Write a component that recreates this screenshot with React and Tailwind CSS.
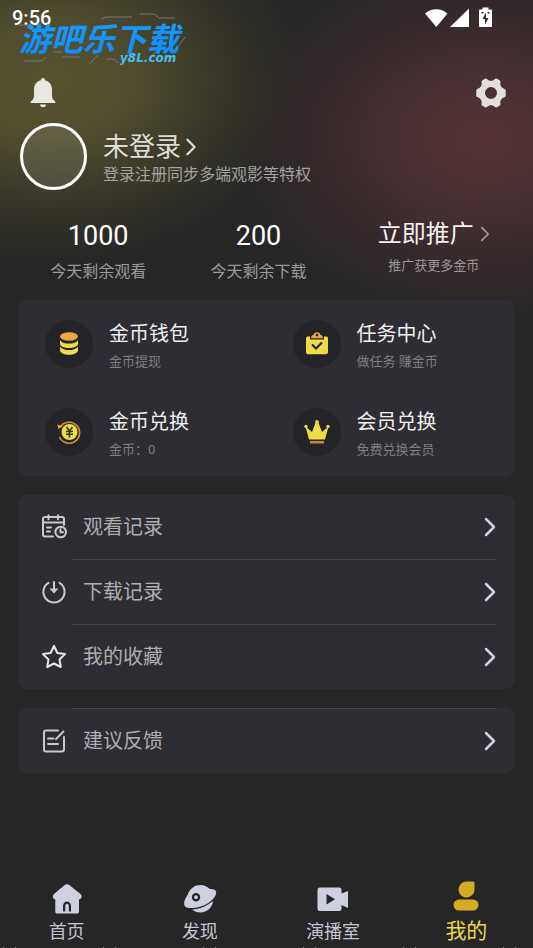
import React, { useState } from 'react';

const glow = 'bg-[radial-gradient(ellipse_250px_180px_at_50px_80px,#58532e_0%,#514e2f_30%,#3a3829_65%,transparent_100%),radial-gradient(ellipse_250px_180px_at_485px_138px,#553335_0%,#483032_35%,#35292b_70%,transparent_100%)]';

const Chevron = ({ className }) => (
  <svg viewBox="0 0 12 20" fill="none" stroke="currentColor" strokeLinecap="round" strokeLinejoin="round" className={className} aria-hidden="true">
    <path d="M2 2l8 8-8 8" />
  </svg>
);

const BellIcon = () => (
  <svg viewBox="0 0 26 30" className="w-[26px] h-[30px]" fill="#e8e7e2" aria-hidden="true">
    <path d="M13 0a2 2 0 0 1 2 2.300C19.600 3.500 22 7 22 11.500V18c0 2.300 1 3.800 3.300 5.500V25H.7v-1.500C3 21.800 4 20.300 4 18v-6.500C4 7 6.400 3.500 11 2.300A2 2 0 0 1 13 0z" />
    <path d="M10 26.500h6c0 1.500-1.300 2.700-3 2.700s-3-1.200-3-2.700z" />
  </svg>
);

const GearIcon = () => (
  <svg viewBox="0 0 30 30" className="w-[30px] h-[30px]" aria-hidden="true">
    <path
      fill="#e3dede"
      fillRule="evenodd"
      d="M6.500 2.200 9 .8c1-.4 1.700-.2 2.300.5 2.200 2 5.200 2 7.400 0 .6-.7 1.300-.9 2.300-.5l2.500 1.400c.9.500 1.100 1.200.9 2.100-.6 3 .9 5.500 3.800 6.400.9.300 1.400.8 1.500 1.800v5c-.1 1-.6 1.500-1.500 1.800-2.900.9-4.400 3.400-3.800 6.400.2.900 0 1.600-.9 2.100L21 29.200c-1 .4-1.700.2-2.300-.5-2.200-2-5.200-2-7.400 0-.6.7-1.300.9-2.300.5l-2.500-1.400c-.9-.5-1.100-1.200-.9-2.100.6-3-.9-5.500-3.800-6.400C.9 19 .4 18.500.3 17.500v-5c.1-1 .6-1.500 1.500-1.800 2.900-.9 4.400-3.400 3.800-6.400-.2-.9 0-1.600.9-2.100zM15 9a6 6 0 1 0 0 12 6 6 0 0 0 0-12z"
    />
  </svg>
);

const SignalIcons = () => (
  <svg viewBox="0 0 68 22" className="w-[68px] h-[22px]" fill="#fff" aria-hidden="true">
    <path d="M0 6.500C6.500.7 16 .7 22.500 6.500L11.300 20z" />
    <path d="M25 20 44 1.500V20z" />
    <path fillRule="evenodd" d="M57.500 .5h6v2h2.500c.5 0 1 .5 1 1v15.500c0 .6-.5 1-1 1h-11c-.6 0-1-.4-1-1V3.500c0-.5.4-1 1-1h2.500zM61 5.500 57.500 12H60v5.500L63.500 11H61zM56.500 5v1.500h2V5zM62.500 5v1.500h2V5z" />
  </svg>
);

const CoinsIcon = () => (
  <svg viewBox="0 0 24 24" className="size-6" aria-hidden="true">
    <ellipse cx="12" cy="4.500" rx="9" ry="4.200" fill="#eba640" />
    <path fill="#ecdc48" d="M3 8.200c2 2.700 5.200 3.300 9 3.300s7-.6 9-3.300v3.600c0 2.600-4 4.200-9 4.200s-9-1.600-9-4.200z" />
    <path fill="#ecdc48" d="M3 14.700C5 17.300 8.200 18 12 18s7-.7 9-3.300v3.600c0 2.700-4 4.500-9 4.500s-9-1.800-9-4.500z" />
  </svg>
);

const TaskIcon = () => (
  <svg viewBox="0 0 24 24" className="size-6" aria-hidden="true">
    <path fill="#ecdc48" d="M2.500 4.500H5V7.500h14V4.500h2.500c.8 0 1.500.8 1.500 2V20c0 1.400-.8 2.200-2 2.200H3c-1.200 0-2-.8-2-2.200V6.500c0-1.200.7-2 1.500-2z" />
    <path fill="#eba640" fillRule="evenodd" d="M8.500 3c.3-3.600 6.700-3.600 7 0 1.800.2 2.500 1.400 2.500 3.200H6C6 4.400 6.700 3.200 8.500 3zM12 1.800a1.300 1.300 0 1 0 0 2.600 1.300 1.300 0 0 0 0-2.600z" />
    <path fill="none" stroke="#242327" strokeWidth="2.200" d="m7 12.500 4 4 6-6" />
  </svg>
);

const ExchangeIcon = () => (
  <svg viewBox="0 0 24 24" className="size-6" aria-hidden="true">
    <path fill="none" stroke="#c98a35" strokeWidth="1.800" d="M3 7.500A10.500 10.500 0 1 1 2.500 17" />
    <path fill="#eba640" d="M.3 4.500 5.500 6 1.500 9z" />
    <circle cx="12.500" cy="12" r="8" fill="#ecdc48" />
    <path fill="none" stroke="#3b3620" strokeWidth="1.600" d="m9.500 7 3 4 3-4M9 11.500h7M9 14.300h7M12.500 11v6.500" />
  </svg>
);

const CrownIcon = () => (
  <svg viewBox="0 0 26 24" className="w-[26px] h-6" aria-hidden="true">
    <path fill="#ecdc48" d="m1.500 6.500 6.500 5.500L11.800 2h2.400L18 12l6.500-5.500L21 19.500H5z" />
    <circle cx="2" cy="6.500" r="1.700" fill="#ecdc48" />
    <circle cx="13" cy="1.900" r="1.800" fill="#ecdc48" />
    <circle cx="24" cy="6.500" r="1.700" fill="#ecdc48" />
    <path fill="#c98a35" d="M6 21h14v2.500H6z" />
  </svg>
);

const line = {
  viewBox: '0 0 26 26',
  fill: 'none',
  stroke: 'currentColor',
  strokeWidth: 2,
  strokeLinecap: 'round',
  strokeLinejoin: 'round',
  className: 'size-[26px] text-[#c9c8ca]',
  'aria-hidden': true,
};

const HistoryIcon = () => (
  <svg {...line}>
    <path d="M12 22.500H4c-1.400 0-2-.8-2-2V5C2 3.700 2.800 3 4 3h17c1.200 0 2 .7 2 2v6M2 8.500h21M7.500 1.300v4M17 1.300v4M6 13.500h4M6 17.500h3" />
    <circle cx="19.700" cy="18" r="5.300" />
    <path d="M19.500 15.300v3h2.500" />
  </svg>
);

const DownloadIcon = () => (
  <svg {...line}>
    <path d="M7.500 3.800a10.600 10.600 0 1 0 11 0M13 3v7" />
    <path fill="currentColor" stroke="none" d="M8.500 9.500h9L13 14.500z" />
  </svg>
);

const StarIcon = () => (
  <svg {...line} className="size-[26px] text-[#e6e5e7]">
    <path d="m13 2 3.400 7 7.600 1.100-5.500 5.400 1.300 7.500-6.800-3.500L6.200 23l1.300-7.500L2 10.100 9.600 9z" />
  </svg>
);

const FeedbackIcon = () => (
  <svg {...line}>
    <path d="M17 2.500H5C3.800 2.500 3 3.300 3 4.500v17c0 1.200.8 2 2 2h16c1.200 0 2-.8 2-2V9M22.500 3.500 15 11M7 10.500h5.500M7 16h10" />
  </svg>
);

const HomeIcon = () => (
  <svg viewBox="0 0 30 30" className="size-[30px]" fill="#ced0e2" aria-hidden="true">
    <path fillRule="evenodd" d="M12.700 1c1.400-1.100 3.200-1.100 4.600 0L28.500 10c2 1.800 1.300 5-1.500 5.500V27.500c0 1.400-.7 2-2 2H5.500c-1.500 0-2.200-.6-2.200-2v-12C.7 15 0 11.800 2 10zM11 27.500h2.300v-5.500c0-3 3.500-3 3.500 0v5.500H19v-5.500c0-6-8-6-8 0z" />
  </svg>
);

const PlanetIcon = () => (
  <svg viewBox="0 0 34 30" className="w-[34px] h-[30px]" fill="#ced0e2" aria-hidden="true">
    <path fillRule="evenodd" d="M4.500 11C7 4 12 1 17.500 1c4 0 7 1.800 9.500 4 4 0 6 .8 6.200 3.500.1 4-5 9.500-12 12.700-8 3.300-16.500 3.800-19 1.500C0 20 1.500 15.500 4.500 11zM13 9a4.200 4.200 0 1 0 0 8.400A4.200 4.200 0 0 0 13 9zm0 2.300a1.900 1.900 0 1 1 0 3.800 1.900 1.900 0 0 1 0-3.800z" />
    <path d="M9 25.500c8-.5 15-3.500 21-8.500-.5 6.500-6 11.500-12.500 11.500-3.500 0-6-1-8.500-3z" />
  </svg>
);

const StudioIcon = () => (
  <svg viewBox="0 0 32 26" className="w-8 h-[30px]" fill="#ced0e2" aria-hidden="true">
    <path fillRule="evenodd" d="M3 1.500h19c1.500 0 2.500.8 2.500 2.500v3.500L31 5v17l-6.500-3v3.500c0 1.700-1 2.500-2.500 2.500H3c-1.500 0-2.500-.8-2.500-2.500V4c0-1.700 1-2.500 2.500-2.500zM9.500 8v10.500L18 13.200z" />
  </svg>
);

const MineIcon = () => (
  <svg viewBox="0 0 26 30" className="w-[26px] h-[30px]" fill="#d5ab22" aria-hidden="true">
    <path d="M13 .5h6.500c1.200 0 2 .6 2 2V8.500a8 8 0 1 1-8.500-8z" />
    <rect x="0.500" y="18.500" width="25" height="11" rx="5.500" />
  </svg>
);

const Watermark = () => (
  <svg viewBox="0 0 170 56" className="absolute left-[17px] top-[10px] w-[170px] h-14" role="img" aria-label="游吧乐下载 y8L.com">
    <defs>
      <linearGradient id="brand" x1="0" y1="0" x2="0" y2="1">
        <stop offset="0" stopColor="#1b9dfb" />
        <stop offset="1" stopColor="#078dff" />
      </linearGradient>
    </defs>
    <g fill="none" stroke="#77757f" strokeWidth="1">
      <path d="M84 9l5-2h26M123 4h14l5 4h16M1 15h16M7 51h18l4-4M45 47h18M72 54l9-9M89 49h8l4 4M160 38l8-11M134 46l6-5M36 42h9" />
    </g>
    <text x="2" y="41" fontSize="32" fontWeight="700" fontStyle="italic" fill="url(#brand)" className="font-['Noto_Sans_CJK_SC',sans-serif]">游吧乐下载</text>
    <text x="103" y="52" fontSize="12" fontWeight="700" fontStyle="italic" fill="#45bdf2" className="font-['DejaVu_Sans',sans-serif]">y8L.com</text>
  </svg>
);

const wallet = [
  { title: '金币钱包', note: '金币提现', Icon: CoinsIcon },
  { title: '任务中心', note: '做任务 赚金币', Icon: TaskIcon },
  { title: '金币兑换', note: '金币：0', Icon: ExchangeIcon },
  { title: '会员兑换', note: '免费兑换会员', Icon: CrownIcon },
];

const records = [
  { title: '观看记录', Icon: HistoryIcon },
  { title: '下载记录', Icon: DownloadIcon },
  { title: '我的收藏', Icon: StarIcon },
];

const tabs = [
  { title: '首页', Icon: HomeIcon },
  { title: '发现', Icon: PlanetIcon },
  { title: '演播室', Icon: StudioIcon },
  { title: '我的', Icon: MineIcon },
];

const MenuRow = ({ title, Icon, divider }) => (
  <button className={`flex w-full pl-[22px] pr-[18px] text-left ${divider ? 'h-[65px]' : 'h-16'}`}>
    <span className="flex items-center w-[30px] shrink-0">
      <Icon />
    </span>
    <span className={`flex flex-1 items-center justify-between pl-3 ${divider ? 'border-t border-[#454448]' : ''}`}>
      <span className="text-xl text-[#aeadb0]">{title}</span>
      <Chevron className="w-3 h-5 stroke-[2.5] text-[#cfd0dc]" />
    </span>
  </button>
);

const Stat = ({ value, label }) => (
  <div className="flex flex-col items-center">
    <span className="text-[27px] leading-8 text-white">{value}</span>
    <span className="mt-2 text-base leading-6 text-[#9b9b9c]">{label}</span>
  </div>
);

const App = () => {
  const [active, setActive] = useState('我的');

  return (
    <div className={`relative flex min-h-screen flex-col bg-[#262626] bg-no-repeat font-[Roboto,'Noto_Sans_CJK_SC',sans-serif] ${glow}`}>
      {/* STATUS BAR */}
      <div className="flex h-9 items-center justify-between pl-3 pr-10 text-xl font-medium text-white">
        <span>9:56</span>
        <SignalIcons />
      </div>
      <Watermark />

      <header className="mt-[42px] flex items-center justify-between pl-[30px] pr-[27px]">
        <button aria-label="消息"><BellIcon /></button>
        <button aria-label="设置"><GearIcon /></button>
      </header>

      {/* PROFILE */}
      <button className="mt-[15px] flex items-center pl-5 text-left">
        <span className="size-[67px] rounded-full border-[3px] border-white bg-white/10" />
        <span className="ml-4 flex flex-col pt-1">
          <span className="flex items-center text-[26px] leading-8 text-[#dcdcd8]">
            未登录
            <Chevron className="ml-1 h-[18px] w-3 stroke-[2.5]" />
          </span>
          <span className="text-base leading-6 text-[#a3a3a1]">登录注册同步多端观影等特权</span>
        </span>
      </button>

      {/* STATS */}
      <section className="mt-[30px] grid grid-cols-[16fr_16fr_19fr] items-start pl-[18px] pr-1">
        <Stat value="1000" label="今天剩余观看" />
        <Stat value="200" label="今天剩余下载" />
        <button className="flex flex-col items-center">
          <span className="flex items-center text-2xl leading-7 text-[#f4f2f2]">
            立即推广
            <Chevron className="ml-1.5 h-4 w-[10px] text-[#a8a2a3] stroke-2" />
          </span>
          <span className="mt-2 text-[13px] leading-5 text-[#9b9798]">推广获更多金币</span>
        </button>
      </section>

      <main className="mx-[19px] mt-4 flex flex-col gap-[19px]">
        <section className="grid grid-cols-2 rounded-lg bg-[#2e2d33]">
          {wallet.map(({ title, note, Icon }) => (
            <button key={title} className="flex h-[88px] items-center pl-[26px] text-left">
              <span className="flex size-12 shrink-0 items-center justify-center rounded-full bg-[#242327]">
                <Icon />
              </span>
              <span className="ml-4 flex flex-col pt-1">
                <span className="text-xl leading-8 text-[#efeff0]">{title}</span>
                <span className="text-[13px] leading-6 text-[#7f7e82]">{note}</span>
              </span>
            </button>
          ))}
        </section>

        <section className="rounded-lg bg-[#2e2d33]">
          {records.map((item, index) => (
            <MenuRow key={item.title} {...item} divider={index > 0} />
          ))}
        </section>

        <section className="rounded-lg bg-[#2e2d33]">
          <MenuRow title="建议反馈" Icon={FeedbackIcon} divider />
        </section>
      </main>

      {/* TAB BAR */}
      <nav className="mt-auto grid h-[66px] grid-cols-4">
        {tabs.map(({ title, Icon }) => (
          <button
            key={title}
            onClick={() => setActive(title)}
            className={`flex flex-col items-center ${active === title ? 'gap-1' : 'gap-0.5 pt-[3px]'}`}
          >
            <Icon />
            <span className={active === title ? 'text-[21px] leading-8 text-[#e8d84a]' : 'text-lg leading-8 text-[#c3c4d2]'}>{title}</span>
          </button>
        ))}
      </nav>
      <div className="h-px bg-[repeating-linear-gradient(90deg,transparent_0_3px,#8a8a8a_3px_4px,transparent_4px_15px,#8a8a8a_15px_16px,transparent_16px_100px)]" />
    </div>
  );
};

export default App;
